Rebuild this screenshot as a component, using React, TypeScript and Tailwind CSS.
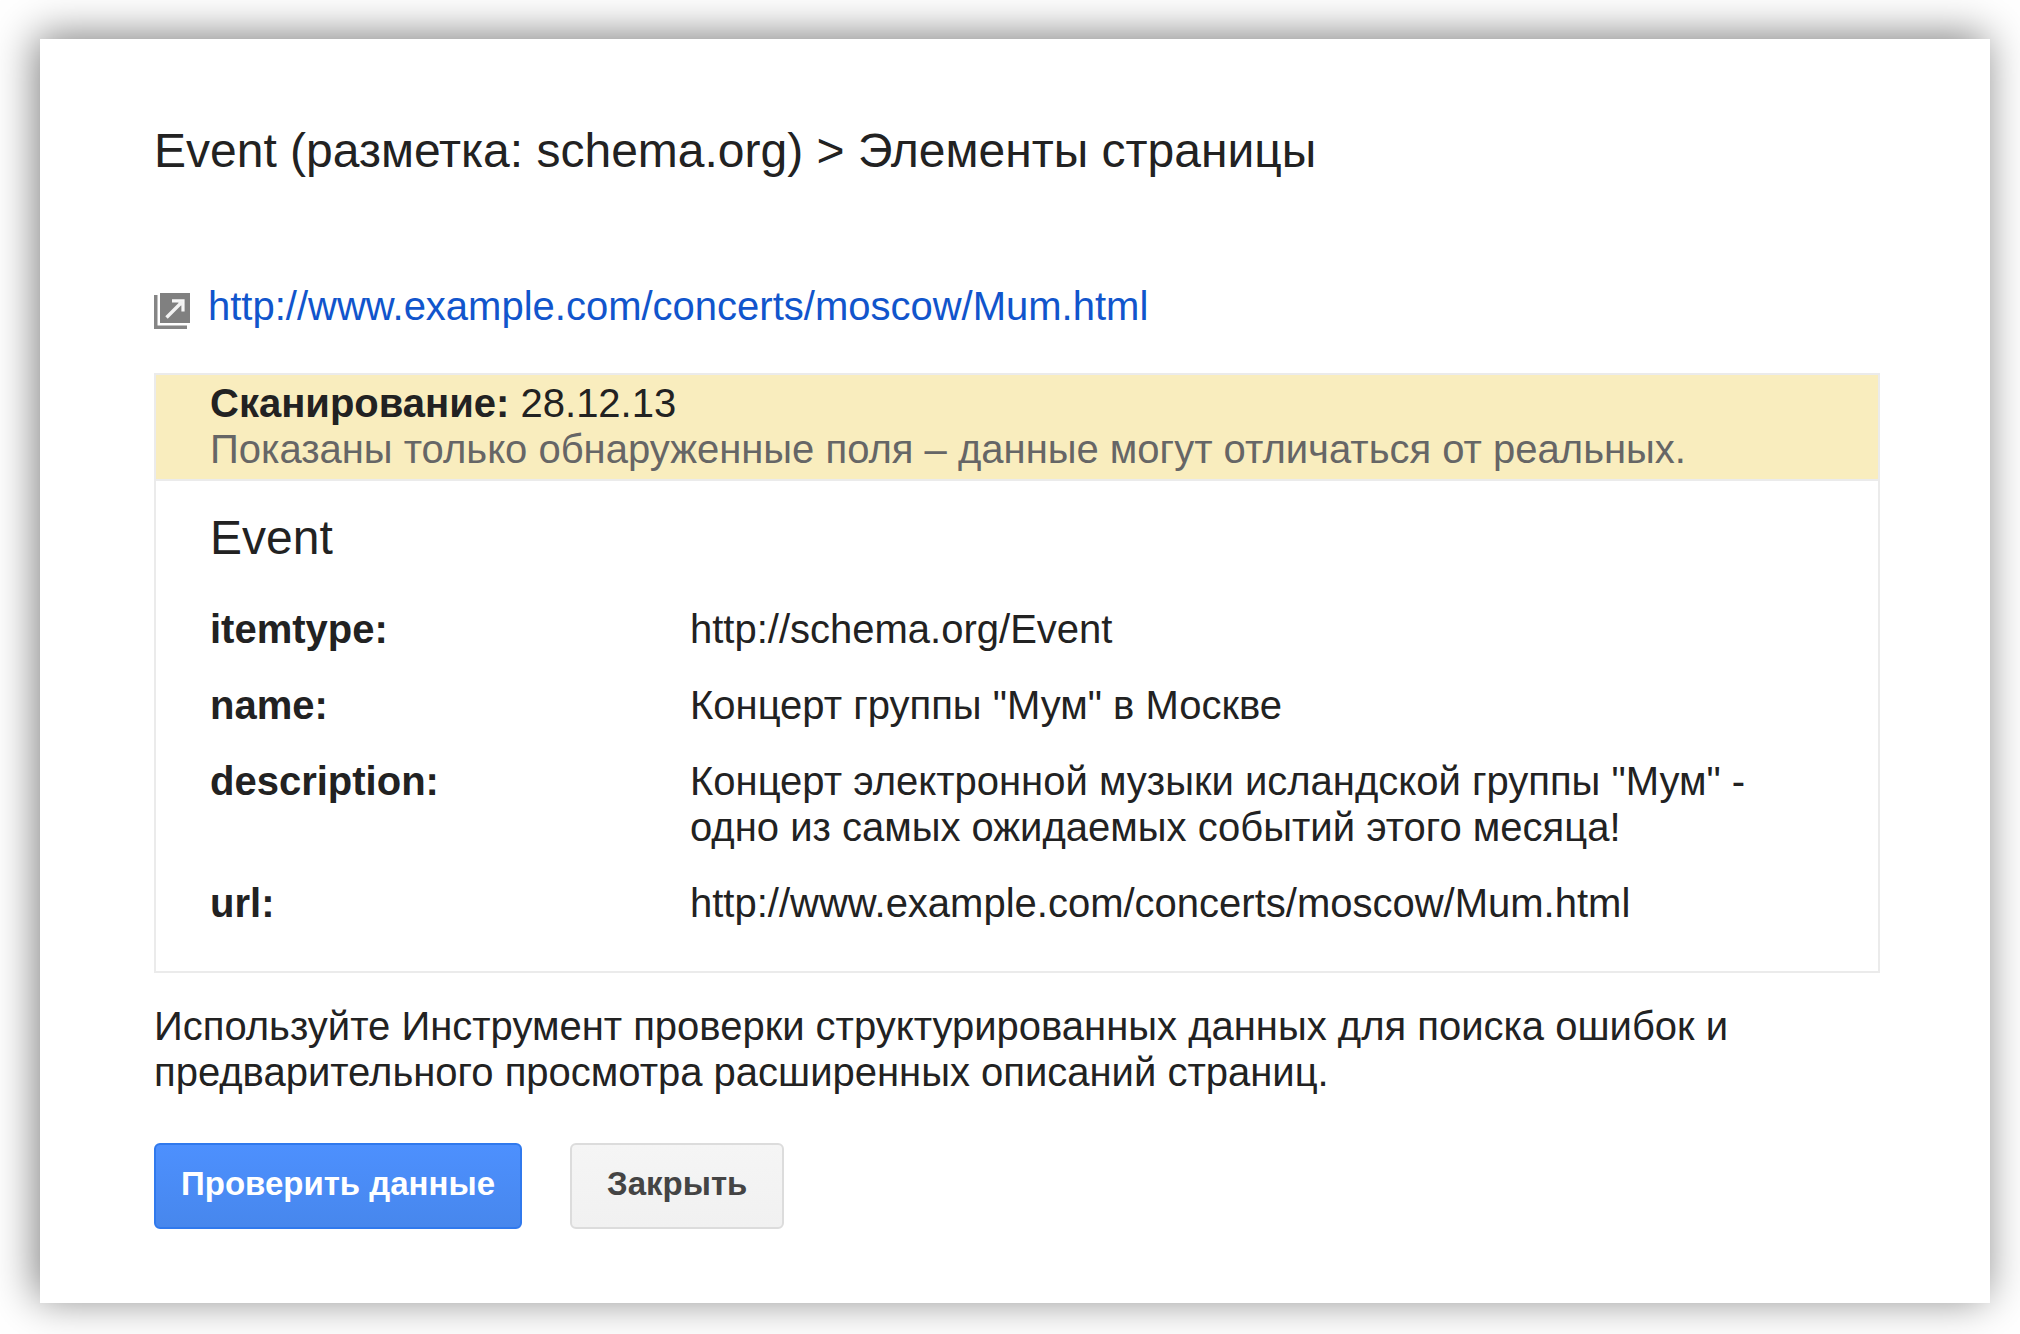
const fields = [
  { name: "itemtype", value: "http://schema.org/Event" },
  { name: "name", value: 'Концерт группы "Мум" в Москве' },
  {
    name: "description",
    value:
      'Концерт электронной музыки исландской группы "Мум" - одно из самых ожидаемых событий этого месяца!',
  },
  { name: "url", value: "http://www.example.com/concerts/moscow/Mum.html" },
];

const OpenIcon = () => (
  <svg viewBox="0 0 36 36" className="w-9 h-9 shrink-0" aria-hidden="true">
    <path d="M0 2h3.5v30.5H33V36H0z" fill="#858585" />
    <path d="M6 0h30v30H6z" fill="#808080" />
    <path d="M12.5 24.5L27 10" stroke="#f2f2f2" strokeWidth="3.4" />
    <path
      d="M18 7.8h11V18.5"
      stroke="#f7f7f7"
      strokeWidth="3.2"
      fill="none"
    />
    <path d="M23 8h6v6z" fill="#f2f2f2" />
  </svg>
);

const App = () => {
  return (
    <div className="bg-white pt-[39px] pb-[31px] pl-10 pr-[30px] overflow-hidden font-['Liberation_Sans',Arial,sans-serif] text-[#222222]">
      <main className="bg-white pt-[84px] pb-[74px] pl-[114px] pr-[110px] text-[40px] leading-[46px] shadow-[-4px_-4px_40px_rgba(0,0,0,0.5)]">
        <h1 className="text-[48px] leading-[56px]">
          Event (разметка: schema.org) &gt; Элементы страницы
        </h1>

        <div className="flex items-end gap-[18px] mt-[104px]">
          <OpenIcon />
          <a
            href="http://www.example.com/concerts/moscow/Mum.html"
            className="text-[#1155cc]"
          >
            http://www.example.com/concerts/moscow/Mum.html
          </a>
        </div>

        <section className="mt-11 border-2 border-[#ebebeb]">
          <div className="bg-[#f9edbe] border-b-2 border-[#ebebeb] px-[54px] pt-[5px] pb-[7px]">
            <p>
              <b>Сканирование:</b> 28.12.13
            </p>
            <p className="text-[#666666]">
              Показаны только обнаруженные поля – данные могут отличаться от
              реальных.
            </p>
          </div>
          <div className="px-[54px] pt-[29px] pb-[45px]">
            <h2 className="text-[48px] leading-[56px]">Event</h2>
            <dl className="mt-10 flex flex-col gap-[30px]">
              {fields.map((f) => (
                <div key={f.name} className="flex">
                  <dt className="w-[480px] shrink-0 font-bold">{f.name}:</dt>
                  <dd>{f.value}</dd>
                </div>
              ))}
            </dl>
          </div>
        </section>

        <p className="mt-[30px]">
          Используйте Инструмент проверки структурированных данных для поиска
          ошибок и предварительного просмотра расширенных описаний страниц.
        </p>

        <div className="flex gap-12 mt-12 text-[33px] font-bold">
          <button
            type="button"
            className="h-[86px] px-[25px] pb-1 rounded-md border-2 border-[#3079ed] bg-linear-to-b from-[#4d90fe] to-[#4787ed] text-white"
          >
            Проверить данные
          </button>
          <button
            type="button"
            className="h-[86px] px-[35px] pb-1 rounded-md border-2 border-[#dcdcdc] bg-linear-to-b from-[#f5f5f5] to-[#f1f1f1] text-[#444444]"
          >
            Закрыть
          </button>
        </div>
      </main>
    </div>
  );
};

export default App;
